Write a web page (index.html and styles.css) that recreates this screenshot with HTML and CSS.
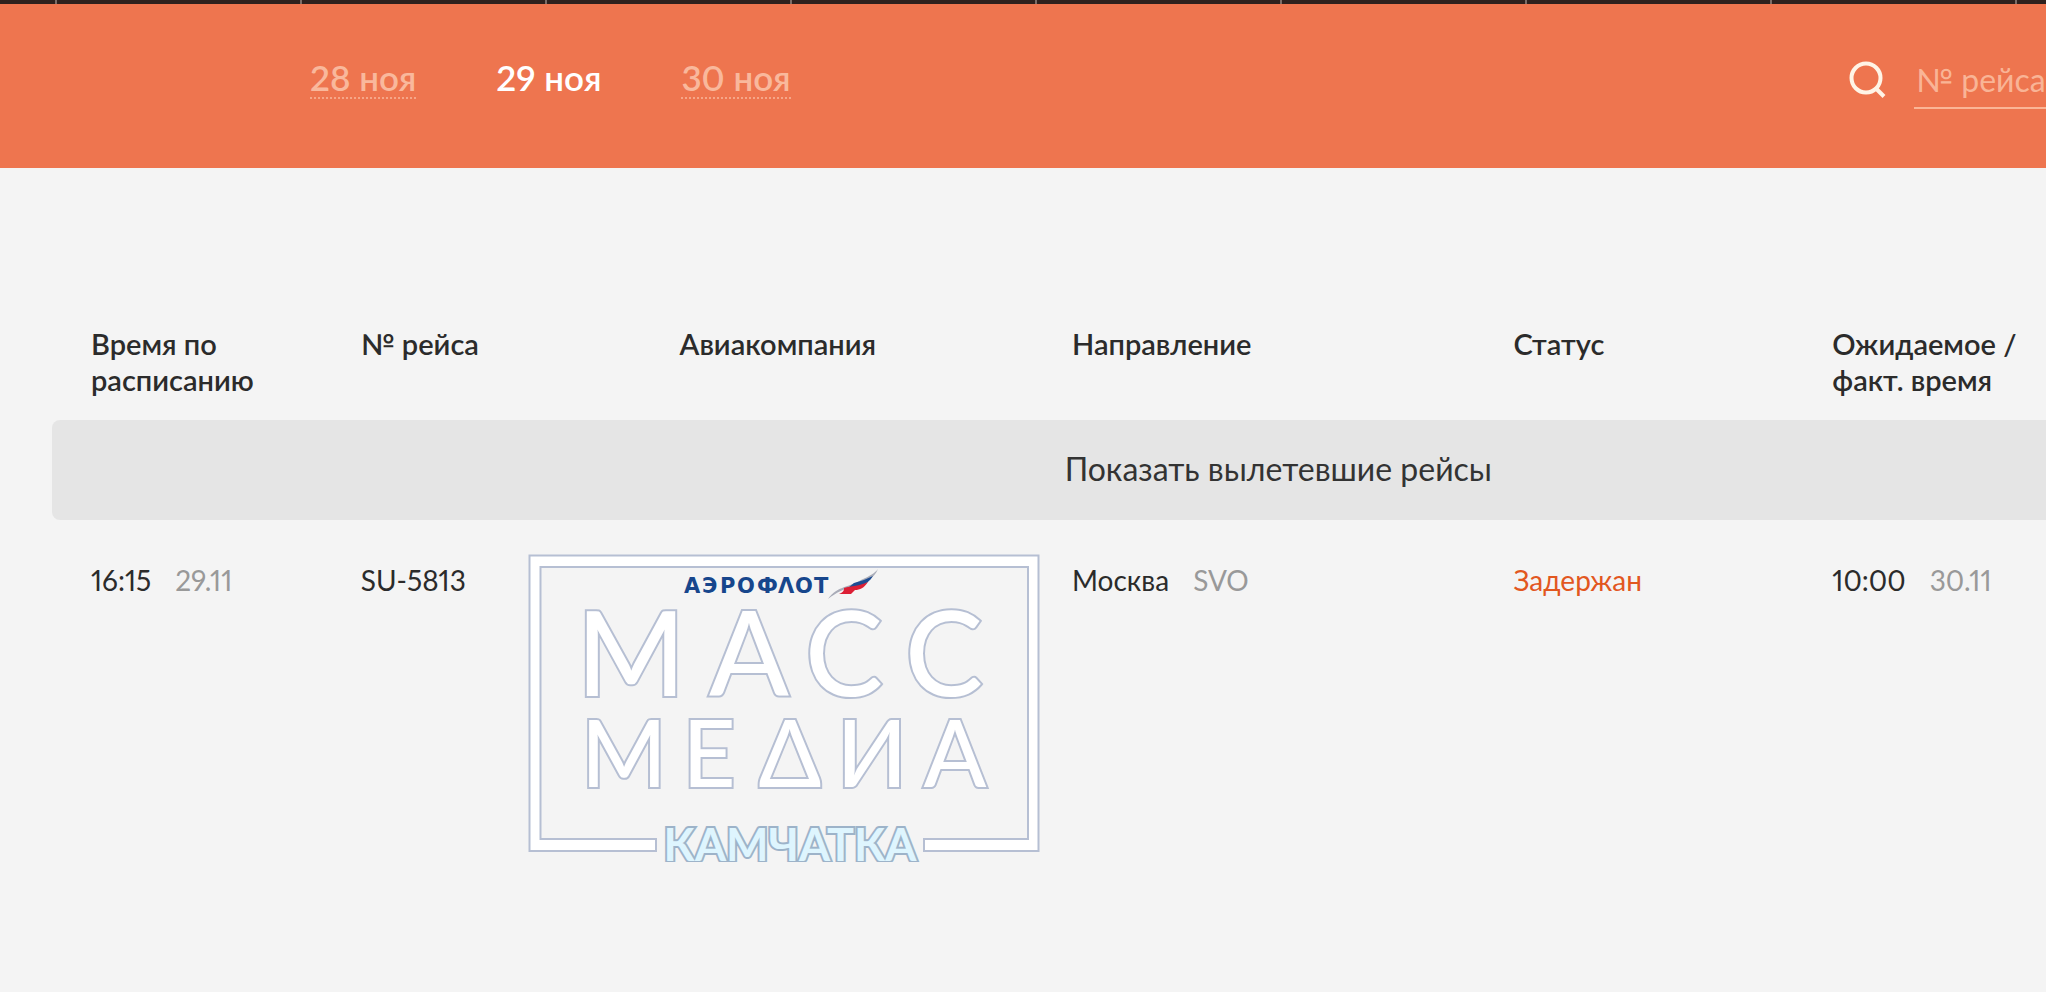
FILE: index.html
```html
<!DOCTYPE html>
<html lang="ru">
<head>
    <meta charset="UTF-8">
    <meta name="viewport" content="width=device-width, initial-scale=1.0">
    <title>Табло вылета</title>
    <link rel="stylesheet" href="styles.css">
</head>
<body>
    <div class="topbar"></div>

    <header class="header">
        <nav class="days">
            <a class="day" href="#28">28 ноя</a>
            <a class="day active" href="#29">29 ноя</a>
            <a class="day" href="#30">30 ноя</a>
        </nav>
        <form class="search">
            <label for="flight" aria-label="Поиск рейса">
                <svg class="search-icon" width="38" height="38" viewBox="0 0 38 38">
                    <circle cx="18" cy="18" r="14.5"/>
                    <path d="M28 28.500L36 36.500"/>
                </svg>
            </label>
            <input type="text" id="flight" placeholder="№ рейса">
        </form>
    </header>

    <main class="main">
        <table class="board">
            <colgroup>
                <col class="col-time">
                <col class="col-flight">
                <col class="col-airline">
                <col class="col-city">
                <col class="col-status">
                <col class="col-fact">
            </colgroup>
            <thead>
                <tr>
                    <th>Время по<br>расписанию</th>
                    <th>№ рейса</th>
                    <th>Авиакомпания</th>
                    <th>Направление</th>
                    <th>Статус</th>
                    <th>Ожидаемое /<br>факт. время</th>
                </tr>
            </thead>
            <tbody>
                <tr>
                    <td class="more" colspan="6"><button type="button">Показать вылетевшие рейсы</button></td>
                </tr>
                <tr>
                    <td>16:15<span class="muted">29.11</span></td>
                    <td>SU-5813</td>
                    <td>
                        <svg class="airline" width="200" height="34" viewBox="0 0 200 34">
                            <text x="4 22 40 57 77 98 115 134" y="25">АЭРОФΛОТ</text>
                            <path fill="#a9acb8" d="M148 31C157 18 170 19 181 12C190 8 195 5 198 1C194 11 184 15 175 18C164 21 157 24 148 31Z"/>
                            <path fill="#1d4c93" d="M174 15C181 13 187 11 193 8C190 13 186 16 180 18L168 20Z"/>
                            <path fill="#dc1f35" d="M164 20C171 18 180 18 188 14C184 20 180 22 175 22L171 26L159 26C164 24 164 22 164 20Z"/>
                        </svg>
                    </td>
                    <td>Москва<span class="muted">SVO</span></td>
                    <td class="delayed">Задержан</td>
                    <td>10:00<span class="muted">30.11</span></td>
                </tr>
            </tbody>
        </table>

        <!-- Watermark -->
        <svg class="watermark" width="512" height="308" viewBox="0 0 512 308">
            <path class="frame" d="M1.500 1.500H510.500V297H396V285H500V13H12.500V285H128V297H1.500Z"/>
            <text class="mass" x="103 221 316 416" y="142">МАСС</text>
            <text class="media" x="96 181 262 344 427" y="233">МЕΔИА</text>
            <text class="kamchatka" x="262" y="307">КАМЧАТКА</text>
        </svg>
    </main>
</body>
</html>
```
FILE: styles.css
```css
body {
    font-family: Lato, "Open Sans", sans-serif;
    font-variant-numeric: proportional-nums;
    background-color: #f4f4f4;
    color: #2b2b2b;
    margin: 0;
}
.topbar {
    height: 4px;
    background: repeating-linear-gradient(90deg, #7a6d68 0, #7a6d68 2px, #2e211e 2px, #2e211e 245px) 55px 0;
}
.header {
    display: flex;
    align-items: center;
    justify-content: space-between;
    box-sizing: border-box;
    height: 164px;
    padding: 0 0 14px 310px;
    background-color: #ee754f;
}
.days {
    display: flex;
    gap: 80px;
}
.day {
    padding-bottom: 2px;
    font-size: 35px;
    line-height: 36px;
    font-weight: 600;
    color: #f9b89c;
    text-decoration: none;
    border-bottom: 2px dotted #f6a688;
}
.day.active {
    color: #fff;
    border-color: transparent;
}
.search {
    display: flex;
    align-items: center;
    gap: 28px;
}
.search label {
    display: flex;
}
.search-icon {
    fill: none;
    stroke: #fff4e6;
    stroke-width: 4;
}
.search input {
    box-sizing: border-box;
    width: 132px;
    height: 56px;
    margin-top: 4px;
    padding: 0 0 2px 2px;
    border: none;
    border-bottom: 2px solid #fbb596;
    border-radius: 0;
    background: none;
    color: #fff;
    font-family: inherit;
    font-size: 32px;
    outline: none;
}
.search input::placeholder {
    color: #f9b496;
    opacity: 1;
}
.main {
    position: relative;
    min-height: 560px;
    padding: 158px 0 0 52px;
    overflow: hidden;
}
.board {
    width: 123%;
    table-layout: fixed;
    border-collapse: collapse;
}
.col-time {
    width: 11%;
}
.col-flight {
    width: 13%;
}
.col-airline {
    width: 16%;
}
.col-city {
    width: 18%;
}
.col-status {
    width: 13%;
}
.col-fact {
    width: 29%;
}
.board th {
    padding: 0 0 22px 39px;
    font-size: 29px;
    line-height: 36px;
    font-weight: 600;
    text-align: left;
    vertical-align: top;
}
.board td {
    padding: 42px 0 0 39px;
    font-size: 28px;
    line-height: 36px;
    vertical-align: top;
}
.board td.more {
    padding: 0;
}
.more button {
    display: block;
    width: 100%;
    height: 100px;
    padding: 0 0 4px;
    border: none;
    border-radius: 8px;
    background-color: #e5e5e5;
    color: #333;
    font-family: inherit;
    font-size: 32px;
    cursor: pointer;
}
.muted {
    margin-left: 24px;
    color: #999;
}
.board td.delayed {
    color: #e2571f;
}
.airline {
    display: block;
    margin-top: 6px;
}
.airline text {
    font-family: "DejaVu Sans", sans-serif;
    font-size: 21px;
    font-weight: bold;
    fill: #17468c;
}
.watermark {
    position: absolute;
    left: 528px;
    top: 386px;
    pointer-events: none;
}
.watermark .frame,
.watermark text {
    fill: #fff;
    stroke: #b6bfd3;
    stroke-width: 2;
    text-anchor: middle;
}
.watermark text {
    font-weight: 500;
    paint-order: stroke;
    stroke-width: 4;
}
.watermark .mass {
    font-size: 117px;
}
.watermark .media {
    font-size: 92px;
}
.watermark .kamchatka {
    font-size: 45px;
    font-weight: 700;
    fill: #def5fe;
    stroke: #9db3c9;
}
```
